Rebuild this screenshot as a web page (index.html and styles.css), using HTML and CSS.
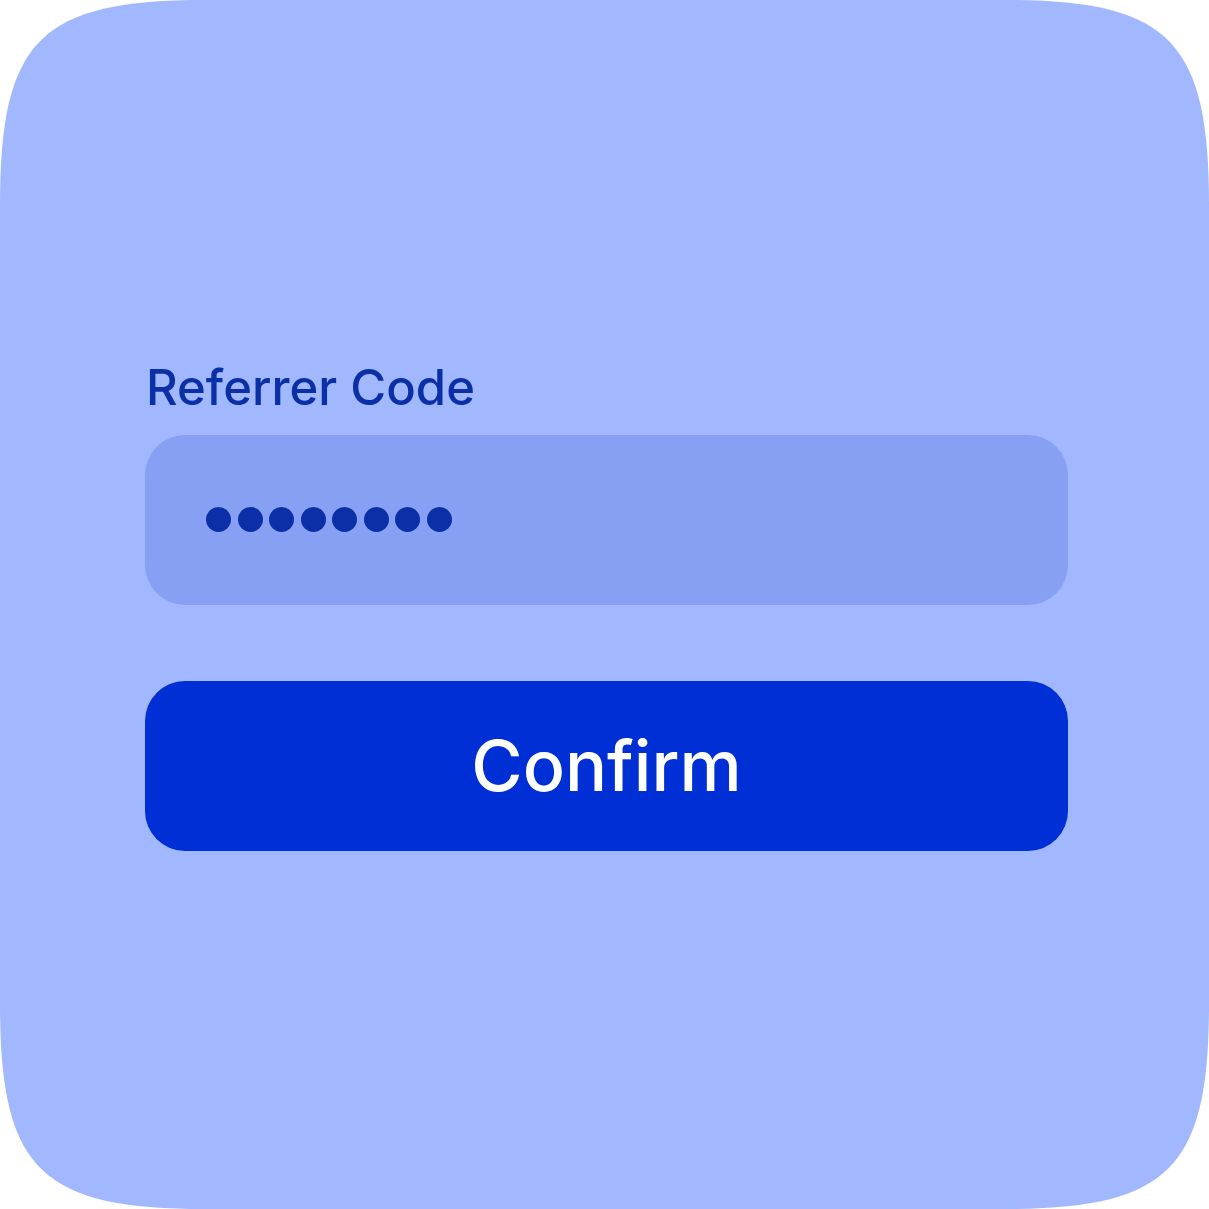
FILE: index.html
```html
<!DOCTYPE html>
<html lang="en">
<head>
    <meta charset="UTF-8">
    <meta name="viewport" content="width=device-width, initial-scale=1.0">
    <title>Referrer Code</title>
    <link rel="stylesheet" href="styles.css">
</head>
<body>
    <div class="card">
        <form class="referrer-form">
            <label class="field-label" for="code">Referrer Code</label>
            <div class="code-input" id="code">
                <span class="dot"></span>
                <span class="dot"></span>
                <span class="dot"></span>
                <span class="dot"></span>
                <span class="dot"></span>
                <span class="dot"></span>
                <span class="dot"></span>
                <span class="dot"></span>
            </div>
            <button type="button" class="confirm-btn">Confirm</button>
        </form>
    </div>
</body>
</html>
```

FILE: styles.css
```css
html, body {
    margin: 0;
    padding: 0;
    background: #ffffff;
}
.card {
    width: 1209px;
    height: 1209px;
    background: #a2b8fe;
    display: flex;
    align-items: center;
    justify-content: center;
    /* smooth (squircle) corners */
    clip-path: path('M 0 205 C 0 40, 40 0, 205 0 L 1004 0 C 1169 0, 1209 40, 1209 205 L 1209 1004 C 1209 1169, 1169 1209, 1004 1209 L 205 1209 C 40 1209, 0 1169, 0 1004 Z');
}
.referrer-form {
    width: 923px;
    margin-left: 4px;
    display: flex;
    flex-direction: column;
}
.field-label {
    font-family: Inter, "Noto Sans", sans-serif;
    font-weight: 500;
    font-size: 49px;
    line-height: 58px;
    color: #0b2fa6;
    margin-left: 1px;
    margin-bottom: 18px;
}
.code-input {
    height: 170px;
    background: #87a0f3;
    border-radius: 40px;
    display: flex;
    align-items: center;
    gap: 6.5px;
    padding-left: 61px;
}
.dot {
    width: 25px;
    height: 25px;
    border-radius: 50%;
    background: #0b2fa6;
}
.confirm-btn {
    margin-top: 76px;
    height: 170px;
    border: none;
    border-radius: 40px;
    background: #0030d5;
    color: #ffffff;
    font-family: Inter, "Noto Sans", sans-serif;
    font-weight: 500;
    font-size: 70px;
    cursor: pointer;
}
```
